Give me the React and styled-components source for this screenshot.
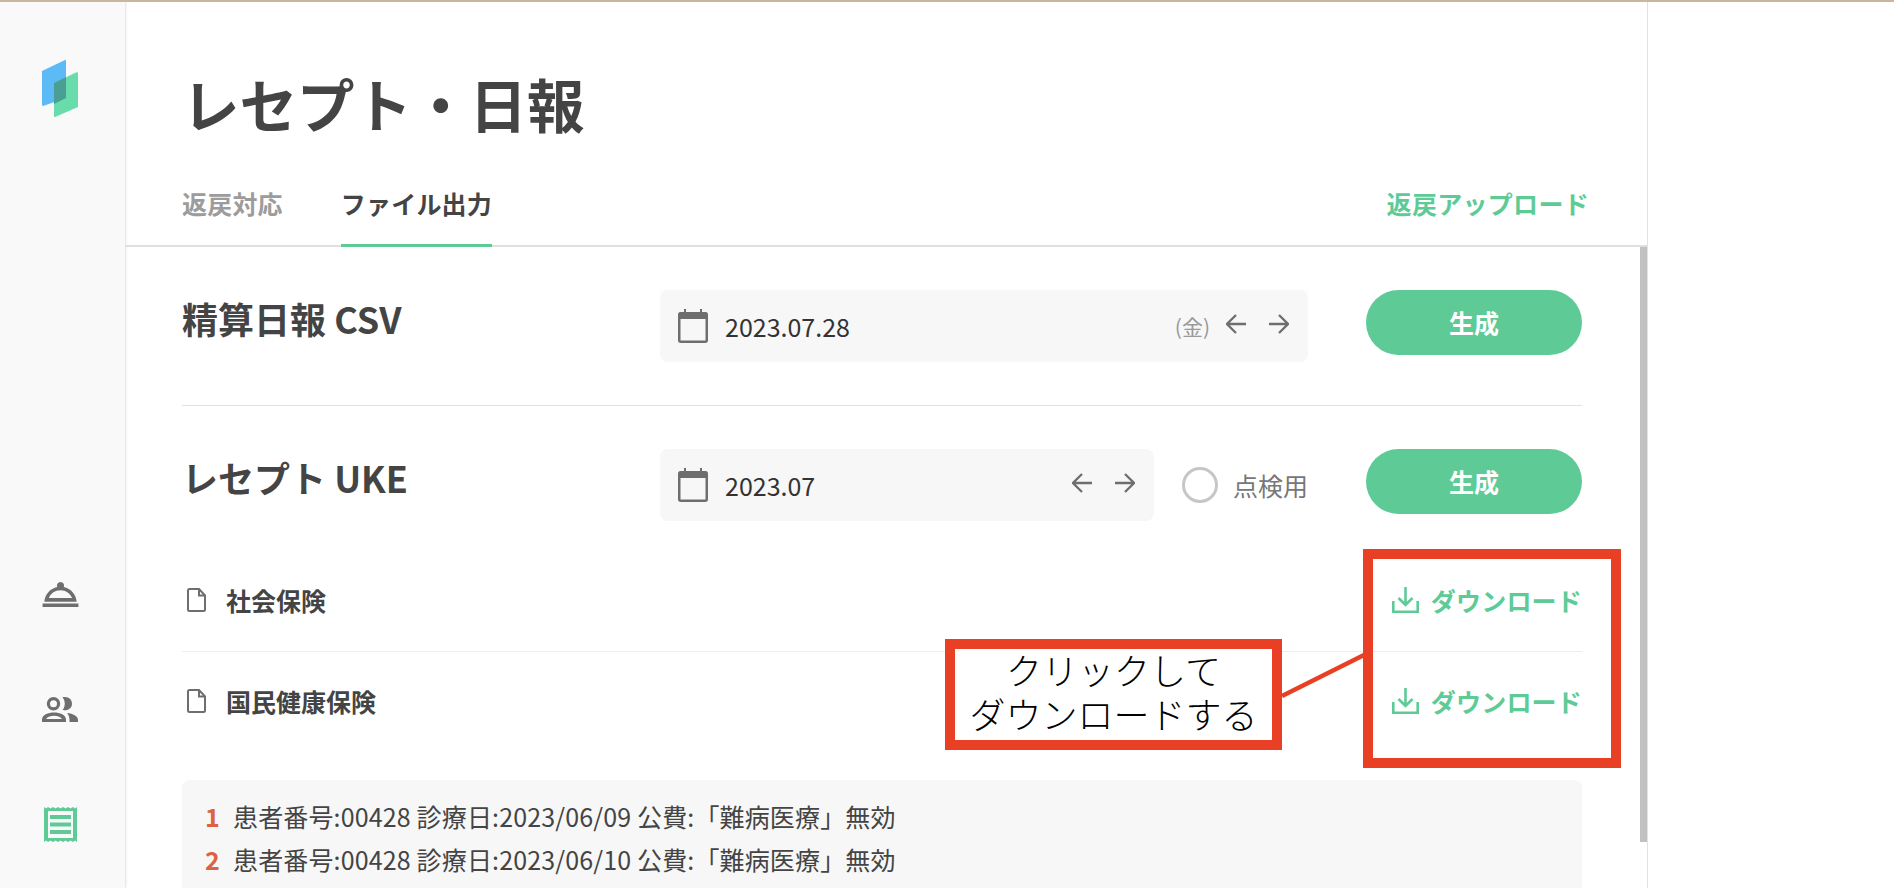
import styled, { createGlobalStyle } from 'styled-components';
import { MdOutlineRoomService } from 'react-icons/md';

const GlobalStyle = createGlobalStyle`
  html, body {
    margin: 0;
    height: 100%;
    overflow: hidden;
    background: #ffffff;
  }
  body {
    font-family: "Noto Sans CJK JP", "Noto Sans", sans-serif;
    color: #444444;
  }
  * {
    box-sizing: border-box;
  }
`;

const Page = styled.div`
  position: relative;
  height: 888px;
  overflow: hidden;
  border-top: 2px solid #c9b79b;
`;

const Shell = styled.div`
  display: flex;
  height: 886px;
`;

const Sidebar = styled.aside`
  width: 125px;
  flex-shrink: 0;
  display: flex;
  flex-direction: column;
  justify-content: space-between;
  align-items: center;
  padding: 58px 5px 6px 0;
  background: #f9f9f9;
  box-shadow: 1px 0 2px rgba(0, 0, 0, 0.12);
`;

const NavList = styled.nav`
  display: flex;
  flex-direction: column;
`;

const NavItem = styled.div`
  width: 120px;
  height: 115px;
  display: flex;
  align-items: center;
  justify-content: center;
  color: ${({ $active }) => ($active ? '#5ecb97' : '#6e6e6e')};
`;

const Main = styled.main`
  width: 1523px;
  flex-shrink: 0;
  border-right: 1px solid #e2e2e2;
  overflow: hidden;
`;

const Header = styled.header`
  border-bottom: 2px solid #e0e0e0;
  padding: 0 65px 0 57px;
`;

const Title = styled.h1`
  margin: 0;
  padding-top: 60px;
  font-size: 57.5px;
  line-height: 82px;
  font-weight: 700;
  color: #444444;
`;

const TabBar = styled.div`
  display: flex;
  align-items: flex-end;
  justify-content: space-between;
  margin-top: 37px;
  margin-bottom: -2px;
`;

const Tabs = styled.div`
  display: flex;
  gap: 58px;
`;

const Tab = styled.div`
  height: 66px;
  padding-top: 4px;
  font-size: 25px;
  letter-spacing: 0.2px;
  line-height: 37px;
  font-weight: 700;
  color: ${({ $active }) => ($active ? '#444444' : '#9c9c9c')};
  border-bottom: 3px solid ${({ $active }) => ($active ? '#5ecb97' : 'transparent')};
`;

const UploadLink = styled.a`
  height: 66px;
  padding-top: 4px;
  margin-right: -7px;
  font-size: 25px;
  letter-spacing: 0.3px;
  line-height: 37px;
  font-weight: 700;
  color: #5ecb97;
`;

const Content = styled.div`
  padding: 0 65px 0 57px;
`;

const GenerateRow = styled.section`
  display: flex;
  align-items: flex-start;
  padding-top: 43px;
  padding-bottom: ${({ $divider }) => ($divider ? '43px' : '0')};
  border-bottom: ${({ $divider }) => ($divider ? '1px solid #e2e2e2' : 'none')};
`;

const RowTitle = styled.h2`
  width: 478px;
  flex-shrink: 0;
  margin: 0;
  font-size: 36px;
  line-height: 56px;
  font-weight: 700;
  color: #444444;
`;

const DateBox = styled.div`
  width: ${({ $width }) => $width}px;
  height: 72px;
  flex-shrink: 0;
  display: flex;
  align-items: center;
  padding: 0 18px;
  background: #f7f7f7;
  border-radius: 8px;
`;

const DateText = styled.span`
  margin-left: 17px;
  font-size: 25px;
  line-height: 37px;
  color: #333333;
  flex: 1;
`;

const Weekday = styled.span`
  font-size: 21px;
  color: #999999;
  margin-right: 16px;
`;

const ArrowGroup = styled.div`
  display: flex;
  gap: 23px;
  margin-bottom: 4px;
  margin-right: 1px;
`;

const CheckLabel = styled.label`
  width: 125px;
  margin-left: 28px;
  margin-right: 59px;
  height: 72px;
  flex-shrink: 0;
  display: flex;
  align-items: center;
  gap: 15px;
  font-size: 25px;
  color: #777777;
  white-space: nowrap;
`;

const Radio = styled.span`
  width: 36px;
  height: 36px;
  flex-shrink: 0;
  border: 3px solid #c6c6c6;
  border-radius: 50%;
`;

const GenerateButton = styled.button`
  width: 216px;
  height: 65px;
  flex-shrink: 0;
  margin-left: ${({ $offset }) => $offset || 0}px;
  padding: 0 0 2px;
  border: none;
  border-radius: 33px;
  background: #5ecb97;
  color: #ffffff;
  font-family: inherit;
  font-size: 25px;
  font-weight: 700;
`;

const FileList = styled.div`
  margin-top: 30px;
`;

const FileRow = styled.div`
  height: ${({ $last }) => ($last ? '100px' : '101px')};
  padding-bottom: 2px;
  display: flex;
  align-items: center;
  justify-content: space-between;
  border-bottom: ${({ $last }) => ($last ? 'none' : '1px solid #eeeeee')};
`;

const FileName = styled.div`
  display: flex;
  align-items: center;
  gap: 20px;
  padding-left: 5px;
  font-size: 25px;
  font-weight: 700;
  color: #444444;
`;

const DownloadLink = styled.a`
  display: flex;
  align-items: center;
  gap: 12px;
  font-size: 25px;
  letter-spacing: 0.2px;
  font-weight: 700;
  color: #5ecb97;
`;

const ErrorBox = styled.div`
  margin-top: 28px;
  padding: 15px 23px 30px;
  background: #f7f7f7;
  border-radius: 8px;
`;

const ErrorLine = styled.div`
  display: flex;
  font-size: 25px;
  letter-spacing: 0.15px;
  line-height: 43px;
  color: #444444;
`;

const ErrorNumber = styled.span`
  width: 28px;
  font-weight: 700;
  color: #dd6242;
`;

const ScrollThumb = styled.div`
  position: absolute;
  left: 1640px;
  top: 245px;
  width: 7px;
  height: 595px;
  background: #c1c1c1;
`;

const Callout = styled.div`
  position: absolute;
  border: 10px solid #e94025;
`;

const DownloadFrame = styled(Callout)`
  left: 1363px;
  top: 547px;
  width: 258px;
  height: 219px;
`;

const NoteBox = styled(Callout)`
  left: 945px;
  top: 637px;
  width: 337px;
  height: 111px;
  background: #ffffff;
`;

const NoteText = styled.div`
  margin-top: -2px;
  color: #000000;
  font-size: 36px;
  font-weight: 300;
  line-height: 44px;
  text-align: center;
  white-space: nowrap;
`;

const Connector = styled.svg`
  position: absolute;
  left: 1280px;
  top: 648px;
`;

const Logo = () => (
  <svg width="36" height="57" viewBox="0 0 36 57">
    <path d="M0 11 L23 0 L24 0 V38 L1 46 L0 45 Z" fill="#5cbbf6" />
    <path d="M12 23 L35 12 L36 13 V47 L13 57 L12 57 Z" fill="#68dcaa" />
    <path d="M12 23 L24 17 V38 L12 44 Z" fill="#4a9f95" />
  </svg>
);

const PeopleIcon = () => (
  <svg width="36" height="25" viewBox="0 0 36 25" fill="currentColor" fillRule="evenodd">
    <path d="M11.5 0 a6.7 6.7 0 1 0 0 13.4 a6.7 6.7 0 1 0 0-13.4Z M11.5 3.2 a3.5 3.5 0 1 1 0 7 a3.5 3.5 0 1 1 0-7Z" />
    <path d="M20.5 .3 C27 -0.8 30 3 30 6.7 C30 10.5 27 14 20.5 13.1 C23.5 9.5 23.5 4 20.5 .3Z" />
    <path d="M0 25 V22.5 C0 18 6 15.5 12 15.5 C18 15.5 24 18 24 22.5 V25 Z M4 22 H20 C18.5 20 15 18.8 12 18.8 C9 18.8 5.5 20 4 22Z" />
    <path d="M25 16 C31 16.5 36 19 36 23 V25 H27.5 V22.5 C27.5 20 26.5 17.5 25 16Z" />
  </svg>
);

const ReceiptIcon = () => (
  <svg width="33" height="35" viewBox="0 0 33 35" fill="currentColor">
    <path
      fillRule="evenodd"
      d="M0 0 L2 1.5 L4 0 L6.5 1.5 L9 0 L11.5 1.5 L14 0 L16.5 1.5 L19 0 L21.5 1.5 L24 0 L26.5 1.5 L29 0 L31 1.5 L33 0 V35 L31 33.5 L29 35 L26.5 33.5 L24 35 L21.5 33.5 L19 35 L16.5 33.5 L14 35 L11.5 33.5 L9 35 L6.5 33.5 L4 35 L2 33.5 L0 35 Z M4 4 V31 H29 V4 Z"
    />
    <rect x="6" y="8" width="21" height="4" />
    <rect x="6" y="15.5" width="21" height="4" />
    <rect x="6" y="23" width="21" height="4" />
  </svg>
);

const CalendarIcon = () => (
  <svg width="30" height="34" viewBox="0 0 30 34">
    <rect x="1.25" y="4.25" width="27.5" height="28.5" rx="1.5" fill="none" stroke="#6e6e6e" strokeWidth="2.5" />
    <path d="M1 5 a2 2 0 0 1 2-2 H6 V0 H8 V3 H22 V0 H24 V3 H27 a2 2 0 0 1 2 2 V10 H1 Z" fill="#6e6e6e" />
  </svg>
);

const Arrow = ({ right }) => (
  <svg width="20" height="20" viewBox="0 0 20 20" fill="none" stroke="#6e6e6e" strokeWidth="2.3">
    {right ? <path d="M0 10 H19 M10 1 L19 10 L10 19" /> : <path d="M20 10 H1 M10 1 L1 10 L10 19" />}
  </svg>
);

const FileIcon = () => (
  <svg width="19" height="24" viewBox="0 0 19 24" fill="none" stroke="#6e6e6e" strokeWidth="2">
    <path d="M2.5 1 H12 L18 7.5 V21.5 a1.5 1.5 0 0 1 -1.5 1.5 H2.5 A1.5 1.5 0 0 1 1 21.5 V2.5 A1.5 1.5 0 0 1 2.5 1 Z" />
    <path d="M12 1 V7.5 H18" />
  </svg>
);

const DownloadIcon = () => (
  <svg width="27" height="26" viewBox="0 0 27 26" fill="none" stroke="#5ecb97" strokeWidth="2.6">
    <path d="M1.3 14 V24.7 H25.7 V14" />
    <path d="M13.5 0 V18 M6.5 11 L13.5 18 L20.5 11" />
  </svg>
);

const errors = [
  { no: 1, text: '患者番号:00428 診療日:2023/06/09 公費:「難病医療」無効' },
  { no: 2, text: '患者番号:00428 診療日:2023/06/10 公費:「難病医療」無効' },
];

const files = ['社会保険', '国民健康保険'];

const App = () => {
  return (
    <Page>
      <GlobalStyle />
      <Shell>
        <Sidebar>
          <Logo />
          <NavList>
            <NavItem><MdOutlineRoomService size={43} /></NavItem>
            <NavItem><PeopleIcon /></NavItem>
            <NavItem $active><ReceiptIcon /></NavItem>
          </NavList>
        </Sidebar>
        <Main>
          <Header>
            <Title>レセプト・日報</Title>
            <TabBar>
              <Tabs>
                <Tab>返戻対応</Tab>
                <Tab $active>ファイル出力</Tab>
              </Tabs>
              <UploadLink>返戻アップロード</UploadLink>
            </TabBar>
          </Header>
          <Content>
            <GenerateRow $divider>
              <RowTitle>精算日報 CSV</RowTitle>
              <DateBox $width={648}>
                <CalendarIcon />
                <DateText>2023.07.28</DateText>
                <Weekday>(金)</Weekday>
                <ArrowGroup>
                  <Arrow />
                  <Arrow right />
                </ArrowGroup>
              </DateBox>
              <GenerateButton $offset={58}>生成</GenerateButton>
            </GenerateRow>
            <GenerateRow>
              <RowTitle>レセプト UKE</RowTitle>
              <DateBox $width={494}>
                <CalendarIcon />
                <DateText>2023.07</DateText>
                <ArrowGroup>
                  <Arrow />
                  <Arrow right />
                </ArrowGroup>
              </DateBox>
              <CheckLabel>
                <Radio />
                点検用
              </CheckLabel>
              <GenerateButton>生成</GenerateButton>
            </GenerateRow>
            <FileList>
              {files.map((name, i) => (
                <FileRow key={name} $last={i === files.length - 1}>
                  <FileName>
                    <FileIcon />
                    {name}
                  </FileName>
                  <DownloadLink>
                    <DownloadIcon />
                    ダウンロード
                  </DownloadLink>
                </FileRow>
              ))}
            </FileList>
            <ErrorBox>
              {errors.map((e) => (
                <ErrorLine key={e.no}>
                  <ErrorNumber>{e.no}</ErrorNumber>
                  {e.text}
                </ErrorLine>
              ))}
            </ErrorBox>
          </Content>
        </Main>
      </Shell>
      <ScrollThumb />
      <DownloadFrame />
      <Connector width="86" height="50" viewBox="0 0 86 50">
        <path d="M2 46 L84 5" stroke="#e94025" strokeWidth="4.5" />
      </Connector>
      <NoteBox>
        <NoteText>
          クリックして
          <br />
          ダウンロードする
        </NoteText>
      </NoteBox>
    </Page>
  );
};

export default App;
